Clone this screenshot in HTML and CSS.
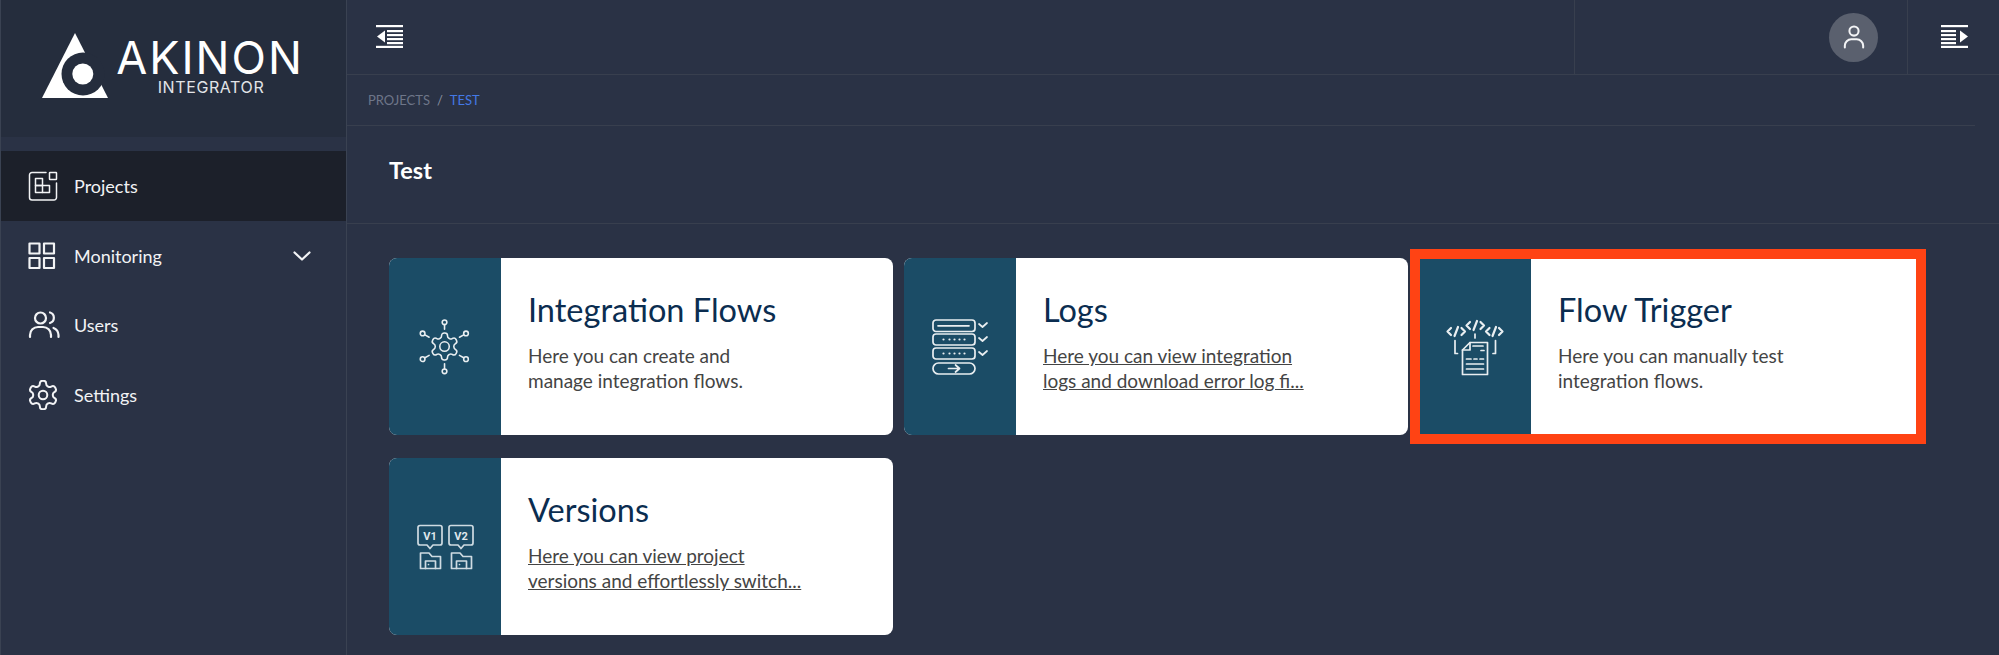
FILE: index.html
```html
<!DOCTYPE html>
<html lang="en">

<head>
    <meta charset="UTF-8">
    <meta name="viewport" content="width=device-width, initial-scale=1.0">
    <title>Akinon Integrator</title>
    <link rel="stylesheet" href="styles.css">
</head>

<body>
    <div class="shell">
        <aside class="sidebar">
            <div class="logo">
                <svg class="logo-mark" width="68" height="68" viewBox="0 0 68 68">
                    <path class="logo-tri" d="M34 1 L67 66 H1 Z" />
                    <circle class="logo-hole" cx="42" cy="42" r="21.5" />
                    <circle class="logo-tri" cx="41.8" cy="42" r="10.5" />
                </svg>
                <div class="logo-text">
                    <div class="logo-name">AKINON</div>
                    <div class="logo-sub">INTEGRATOR</div>
                </div>
            </div>

            <nav class="nav">
                <a class="nav-item active">
                    <svg class="nav-icon thin" width="30" height="30" viewBox="0 0 30 30">
                        <path d="M18 1.5H4A2.5 2.5 0 0 0 1.5 4V26.5A2.5 2.5 0 0 0 4 29H26A2.5 2.5 0 0 0 28.500 26.500V12" />
                        <rect x="21.500" y="1.500" width="7" height="7" rx="0.500" />
                        <rect x="7.500" y="7.500" width="7" height="7" />
                        <rect x="7.500" y="14.500" width="14" height="7" />
                        <path d="M14.500 14.500V21.500" />
                    </svg>
                    <span>Projects</span>
                </a>
                <a class="nav-item">
                    <svg class="nav-icon" width="30" height="30" viewBox="0 0 30 30">
                        <rect x="1.500" y="2.500" width="10" height="10" />
                        <rect x="16" y="2.500" width="10" height="10" />
                        <rect x="1.500" y="17" width="10" height="10" />
                        <rect x="16" y="17" width="10" height="10" />
                    </svg>
                    <span>Monitoring</span>
                    <svg class="nav-icon chevron" width="18" height="10" viewBox="0 0 18 10">
                        <path d="M1.500 1.500L9 8.500L16.500 1.500" />
                    </svg>
                </a>
                <a class="nav-item">
                    <svg class="nav-icon wide" width="30" height="30" viewBox="0 0 30 30">
                        <circle cx="12.500" cy="8" r="5.500" />
                        <path d="M2 27V25A8 8 0 0 1 10 17H15A8 8 0 0 1 23 25V27" />
                        <path d="M22 2.500A5.500 5.500 0 0 1 22 13" />
                        <path d="M25.500 18A8 8 0 0 1 30.500 25V27" />
                    </svg>
                    <span>Users</span>
                </a>
                <a class="nav-item">
                    <svg class="nav-icon gear" width="30" height="30" viewBox="1.500 1.500 21 21">
                        <path d="M12.220 2h-.44a2 2 0 0 0-2 2v.18a2 2 0 0 1-1 1.730l-.43.25a2 2 0 0 1-2 0l-.15-.08a2 2 0 0 0-2.730.73l-.22.38a2 2 0 0 0 .73 2.730l.15.1a2 2 0 0 1 1 1.720v.51a2 2 0 0 1-1 1.740l-.15.09a2 2 0 0 0-.73 2.730l.22.38a2 2 0 0 0 2.730.73l.15-.08a2 2 0 0 1 2 0l.43.25a2 2 0 0 1 1 1.730V20a2 2 0 0 0 2 2h.44a2 2 0 0 0 2-2v-.18a2 2 0 0 1 1-1.730l.43-.25a2 2 0 0 1 2 0l.15.08a2 2 0 0 0 2.730-.73l.22-.39a2 2 0 0 0-.73-2.730l-.15-.08a2 2 0 0 1-1-1.740v-.5a2 2 0 0 1 1-1.740l.15-.09a2 2 0 0 0 .73-2.730l-.22-.38a2 2 0 0 0-2.730-.73l-.15.08a2 2 0 0 1-2 0l-.43-.25a2 2 0 0 1-1-1.730V4a2 2 0 0 0-2-2z" />
                        <circle cx="12" cy="12" r="3" />
                    </svg>
                    <span>Settings</span>
                </a>
            </nav>
        </aside>

        <main class="main">
            <header class="topbar">
                <div class="topbar-toggle">
                    <svg width="27" height="23" viewBox="0 0 27 23" fill="#fff">
                        <rect x="0" y="0" width="27" height="2.200" />
                        <rect x="0" y="20.800" width="27" height="2.200" />
                        <rect x="11" y="5" width="16" height="2.200" />
                        <rect x="11" y="9" width="16" height="2.200" />
                        <rect x="11" y="13" width="16" height="2.200" />
                        <rect x="11" y="17" width="16" height="2.200" />
                        <path d="M9 5.500V17.500L1 11.500Z" />
                    </svg>
                </div>
                <div class="topbar-user">
                    <div class="avatar">
                        <svg class="nav-icon" width="22" height="24" viewBox="0 0 24 26">
                            <circle cx="12" cy="6.500" r="5" />
                            <path d="M2 24.500V22.500A7 7 0 0 1 9 15.500H15A7 7 0 0 1 22 22.500V24.500" />
                        </svg>
                    </div>
                </div>
                <div class="topbar-menu">
                    <svg width="27" height="23" viewBox="0 0 27 23" fill="#fff">
                        <rect x="0" y="0" width="27" height="2.200" />
                        <rect x="0" y="20.800" width="27" height="2.200" />
                        <rect x="0" y="5" width="15" height="2.200" />
                        <rect x="0" y="9" width="15" height="2.200" />
                        <rect x="0" y="13" width="15" height="2.200" />
                        <rect x="0" y="17" width="15" height="2.200" />
                        <path d="M19 5.500V17.500L27 11.500Z" />
                    </svg>
                </div>
            </header>

            <div class="breadcrumb">
                <span>PROJECTS</span>
                <span class="crumb-sep">/</span>
                <span class="crumb-current">TEST</span>
            </div>

            <div class="page-head">
                <h1>Test</h1>
            </div>

            <section class="cards">
                <a class="card">
                    <div class="card-side">
                        <svg class="card-icon" width="56" height="56" viewBox="0 0 60 60">
                            <g transform="translate(12.100 12.100) scale(1.450)" stroke-width="1.150">
                                <path d="M12.220 2h-.44a2 2 0 0 0-2 2v.18a2 2 0 0 1-1 1.730l-.43.25a2 2 0 0 1-2 0l-.15-.08a2 2 0 0 0-2.730.73l-.22.38a2 2 0 0 0 .73 2.730l.15.1a2 2 0 0 1 1 1.720v.51a2 2 0 0 1-1 1.740l-.15.09a2 2 0 0 0-.73 2.730l.22.38a2 2 0 0 0 2.730.73l.15-.08a2 2 0 0 1 2 0l.43.25a2 2 0 0 1 1 1.730V20a2 2 0 0 0 2 2h.44a2 2 0 0 0 2-2v-.18a2 2 0 0 1 1-1.730l.43-.25a2 2 0 0 1 2 0l.15.08a2 2 0 0 0 2.730-.73l.22-.39a2 2 0 0 0-.73-2.730l-.15-.08a2 2 0 0 1-1-1.740v-.5a2 2 0 0 1 1-1.740l.15-.09a2 2 0 0 0 .73-2.730l-.22-.38a2 2 0 0 0-2.730-.73l-.15.08a2 2 0 0 1-2 0l-.43-.25a2 2 0 0 1-1-1.730V4a2 2 0 0 0-2-2z" />
                                <circle cx="12" cy="12" r="3.500" />
                            </g>
                            <circle cx="29.500" cy="3.500" r="2.500" />
                            <path d="M29.500 6V11" />
                            <circle cx="29.500" cy="56" r="2.500" />
                            <path d="M29.500 48V53.500" />
                            <circle cx="6" cy="15.500" r="2.500" />
                            <path d="M8.500 17L13 19.500" />
                            <circle cx="52.500" cy="15.500" r="2.500" />
                            <path d="M50 17L45.500 19.500" />
                            <circle cx="6" cy="43" r="2.500" />
                            <path d="M8.500 41.500L13 39" />
                            <circle cx="52.500" cy="43" r="2.500" />
                            <path d="M50 41.500L45.500 39" />
                        </svg>
                    </div>
                    <div class="card-body">
                        <h2>Integration Flows</h2>
                        <p>Here you can create and<br>manage integration flows.</p>
                    </div>
                </a>

                <a class="card">
                    <div class="card-side">
                        <svg class="card-icon" width="56" height="56" viewBox="0 0 56 56">
                            <rect x="1" y="1" width="42" height="11.500" rx="3" />
                            <path d="M6 6.800H37" />
                            <rect x="1" y="15" width="42" height="11" rx="3" />
                            <rect x="1" y="29" width="42" height="11" rx="3" />
                            <rect x="1" y="44" width="42" height="11" rx="5.500" />
                            <path class="dots" d="M11.500 20.500h.01M17.500 20.500h.01M22.500 20.500h.01M27.500 20.500h.01M32.500 20.500h.01M11.500 34.500h.01M17.500 34.500h.01M22.500 34.500h.01M27.500 34.500h.01M32.500 34.500h.01" />
                            <path d="M16.500 49.500H27.500M23.500 46L27.500 49.500L23.500 53" />
                            <path d="M47 5L50.500 8L55 4M47 19L50.500 22L55 18M47 33L50.500 36L55 32" />
                        </svg>
                    </div>
                    <div class="card-body">
                        <h2>Logs</h2>
                        <p class="clamped">Here you can view integration<br>logs and download error log fi...</p>
                    </div>
                </a>

                <a class="card marked">
                    <div class="card-side">
                        <svg class="card-icon" width="60" height="60" viewBox="0 0 60 60">
                            <path class="code" d="M6 11L2.500 14.500L6 18M16.500 11L20 14.500L16.500 18M13 10L9.500 19" />
                            <path class="code" d="M25 5L21.500 8.500L25 12M35.500 5L39 8.500L35.500 12M32 4L28.500 13" />
                            <path class="code" d="M44.500 11L41 14.500L44.500 18M54 11L57.500 14.500L54 18M51 10L47.500 19" />
                            <path d="M30 17V21M10 23.500V36.500H12.500M50.500 23.500V36.500H48" />
                            <path d="M25 25.500H42.500V57.500H17.500V33Z" />
                            <path d="M25 25.500V33H17.500" />
                            <path d="M28 29H38M36 33.500H39M21.500 42H26M29 42H32M35 42H38.500M21.500 47H38.500M21.500 52H38.500" />
                        </svg>
                    </div>
                    <div class="card-body">
                        <h2>Flow Trigger</h2>
                        <p>Here you can manually test<br>integration flows.</p>
                    </div>
                </a>

                <a class="card">
                    <div class="card-side">
                        <svg class="card-icon versions" width="60" height="60" viewBox="0 0 60 60">
                            <path d="M5 8.500H25A2 2 0 0 1 27 10.500V26A2 2 0 0 1 25 28H18L15 31.500L12 28H5A2 2 0 0 1 3 26V10.500A2 2 0 0 1 5 8.500Z" />
                            <path d="M36 8.500H56A2 2 0 0 1 58 10.500V26A2 2 0 0 1 56 28H49L46 31.500L43 28H36A2 2 0 0 1 34 26V10.500A2 2 0 0 1 36 8.500Z" />
                            <text class="version-label" x="15" y="22.500">V1</text>
                            <text class="version-label" x="46" y="22.500">V2</text>
                            <path d="M5.500 51.500V36H14L17 39.500H25.500V51.500Z" />
                            <path d="M10.500 51.500V44H20.500V51.500M13.500 47.500h.01" />
                            <path d="M36.500 51.500V36H45L48 39.500H56.500V51.500Z" />
                            <path d="M41.500 51.500V44H51.500V51.500M44.500 47.500h.01" />
                        </svg>
                    </div>
                    <div class="card-body">
                        <h2>Versions</h2>
                        <p class="clamped">Here you can view project<br>versions and effortlessly switch...</p>
                    </div>
                </a>
            </section>
        </main>
    </div>
</body>

</html>
```

FILE: styles.css
```css
* {
    box-sizing: border-box;
}

html,
body {
    height: 100%;
}

body {
    margin: 0;
    overflow: hidden;
    background: #2a3245;
    color: #fff;
    font-family: Lato, "Open Sans", sans-serif;
}

.shell {
    display: flex;
    height: 100%;
}

/* sidebar */
.sidebar {
    flex: 0 0 347px;
    border-left: 1px solid #3a4252;
    border-right: 1px solid #3a4252;
}

.logo {
    display: flex;
    align-items: flex-start;
    gap: 9px;
    height: 137px;
    padding: 32px 0 0 40px;
    background: #252d3d;
}

.logo-tri {
    fill: #fff;
}

.logo-hole {
    fill: #252d3d;
}

.logo-text {
    display: flex;
    flex-direction: column;
    align-items: center;
    width: 184px;
    padding-top: 5px;
}

.logo-name {
    font-family: Inter, sans-serif;
    font-size: 45px;
    font-weight: 400;
    line-height: 42px;
    letter-spacing: 2px;
}

.logo-sub {
    padding-left: 2px;
    font-family: Inter, sans-serif;
    font-size: 16px;
    line-height: 17px;
    letter-spacing: 0.6px;
    color: #e2e4e8;
}

.nav {
    margin-top: 14px;
}

.nav-item {
    display: flex;
    align-items: center;
    gap: 16px;
    height: 69.5px;
    padding: 0 35px 0 27px;
    font-size: 18px;
    color: #f2f3f5;
}

.nav-item.active {
    height: 70px;
    background: #1c202a;
}

.nav-icon {
    flex: none;
    fill: none;
    stroke: #f2f3f5;
    stroke-width: 2.200;
    stroke-linecap: round;
    stroke-linejoin: round;
}

.thin {
    stroke-width: 1.500;
}

.wide {
    overflow: visible;
}

.gear {
    stroke-width: 1.400;
}

.chevron {
    margin-left: auto;
}

/* top bar */
.main {
    flex: 1;
    min-width: 0;
}

.topbar {
    display: flex;
    align-items: stretch;
    height: 75px;
    border-bottom: 1px solid #383f4e;
}

.topbar-toggle {
    display: flex;
    align-items: center;
    flex: 0 0 1227px;
    padding: 0 0 2px 29px;
}

.topbar-user {
    display: flex;
    align-items: center;
    justify-content: flex-end;
    flex: 1;
    padding-right: 29px;
    border-left: 1px solid #383f4e;
    border-right: 1px solid #383f4e;
}

.topbar-menu {
    display: flex;
    align-items: center;
    justify-content: center;
    flex: 0 0 91px;
    padding: 0 0 2px 2px;
}

.avatar {
    display: flex;
    align-items: center;
    justify-content: center;
    width: 49px;
    height: 49px;
    border-radius: 50%;
    background: #5a606e;
}

/* breadcrumb + title */
.breadcrumb {
    display: flex;
    align-items: center;
    gap: 7px;
    height: 51px;
    margin-right: 24px;
    padding-left: 21px;
    font-size: 13px;
    color: #6e7689;
    border-bottom: 1px solid #383f4e;
}

.crumb-sep {
    color: #8a91a0;
}

.crumb-current {
    color: #4479e6;
}

.page-head {
    display: flex;
    align-items: center;
    height: 98px;
    padding: 0 0 10px 42px;
    border-bottom: 1px solid #383f4e;
}

.page-head h1 {
    margin: 0;
    font-size: 23.500px;
    font-weight: 700;
}

/* cards */
.cards {
    display: grid;
    grid-template-columns: repeat(3, 504px);
    grid-auto-rows: 177px;
    gap: 23px 11px;
    padding: 34px 0 0 42px;
}

.card {
    position: relative;
    display: flex;
    background: #fff;
    border-radius: 8px;
}

.card-side {
    display: flex;
    align-items: center;
    justify-content: center;
    flex: 0 0 112px;
    background: #1b4c66;
    border-radius: 8px 0 0 8px;
}

.card-icon {
    fill: none;
    stroke: #e9eef1;
    stroke-width: 1.700;
    stroke-linecap: round;
    stroke-linejoin: round;
}

.dots,
.code {
    stroke-width: 2.200;
}

.versions {
    stroke: #cfdbe2;
}

.version-label {
    fill: #dfe7ec;
    stroke: none;
    font-family: Roboto, sans-serif;
    font-size: 11px;
    font-weight: 700;
    text-anchor: middle;
}

.card-body {
    flex: 1;
    padding: 30px 0 0 27px;
}

.card-body h2 {
    margin: 0 0 11px;
    font-size: 32.500px;
    font-weight: 400;
    line-height: 44px;
    color: #0b2d50;
}

.card-body p {
    margin: 0;
    font-size: 19px;
    line-height: 25px;
    color: #444;
}

.clamped {
    text-decoration: underline;
}

/* red annotation drawn over the third card */
.marked,
.marked .card-side {
    border-radius: 0;
}

.marked::after {
    content: "";
    position: absolute;
    top: -9px;
    left: -9px;
    width: 516px;
    height: 195px;
    box-sizing: border-box;
    border: 10px solid #ff4314;
}
```
